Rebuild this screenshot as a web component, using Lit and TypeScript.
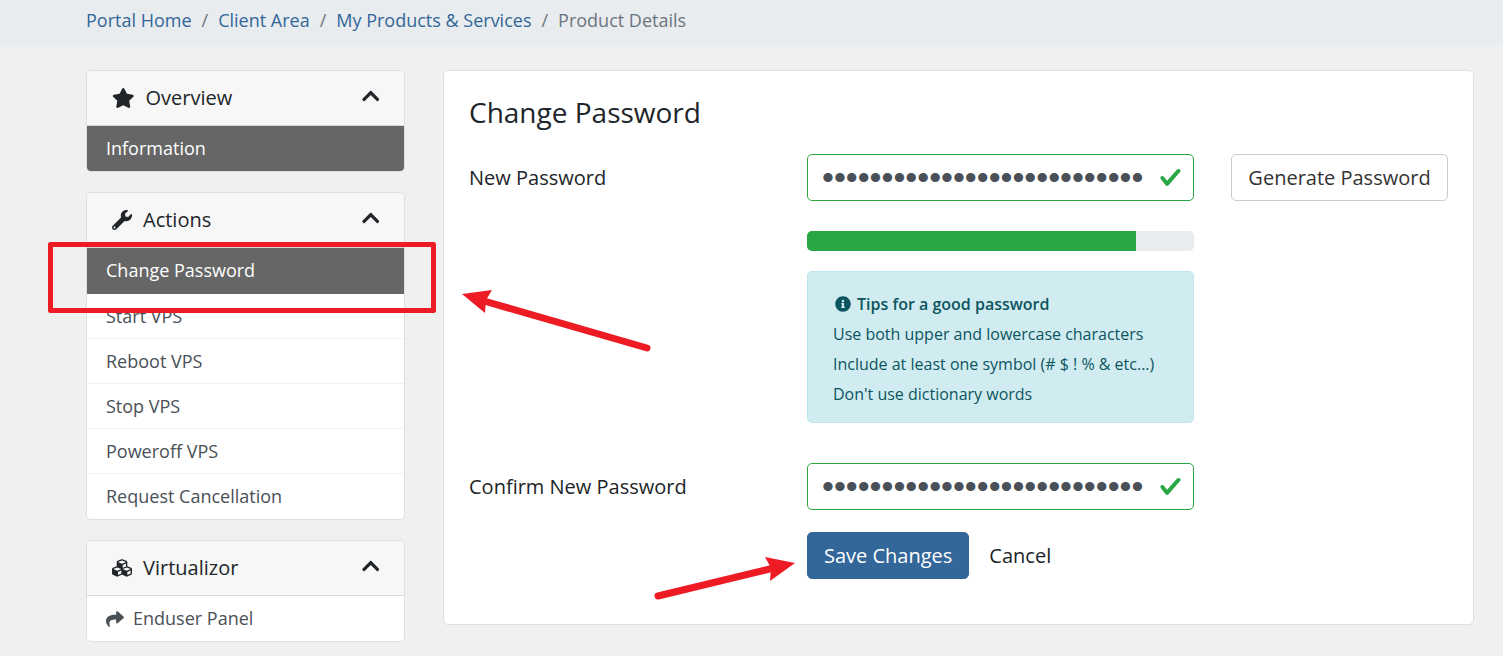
import { LitElement, html, css, svg } from "lit";
import { customElement, property } from "lit/decorators.js";

const icons = {
  star: {
    box: "0 0 576 512",
    d: "M259.3 17.8L194 150.2 47.9 171.5c-26.2 3.8-36.7 36.1-17.7 54.6l105.7 103-25 145.5c-4.5 26.3 23.2 46 46.4 33.7L288 439.6l130.7 68.7c23.2 12.2 50.9-7.4 46.4-33.7l-25-145.5 105.7-103c19-18.5 8.5-50.8-17.7-54.6L382 150.2 316.7 17.8c-11.7-23.6-45.6-23.9-57.4 0z",
  },
  wrench: {
    box: "0 0 512 512",
    d: "M507.73 109.1c-2.24-9.03-13.54-12.09-20.12-5.51l-74.36 74.36-67.88-11.31-11.31-67.88 74.36-74.36c6.62-6.62 3.43-17.9-5.66-20.16-47.38-11.74-99.55.91-136.58 37.93-39.64 39.64-50.55 97.1-34.05 147.2L18.74 402.76c-24.99 24.99-24.99 65.51 0 90.5 24.99 24.99 65.51 24.99 90.5 0l213.21-213.21c50.12 16.71 107.47 5.68 147.37-34.22 37.07-37.07 49.7-89.32 37.91-136.73zM64 472c-13.25 0-24-10.75-24-24 0-13.26 10.75-24 24-24s24 10.74 24 24c0 13.25-10.75 24-24 24z",
  },
  cubes: {
    box: "0 0 512 512",
    d: "M488.6 250.2L392 214V105.5c0-15-9.3-28.4-23.4-33.7l-100-37.5c-8.1-3.1-17.1-3.1-25.3 0l-100 37.5c-14.1 5.3-23.4 18.7-23.4 33.7V214l-96.6 36.2C9.3 255.5 0 268.9 0 283.9V394c0 13.6 7.7 26.1 19.9 32.2l100 50c10.1 5.1 22.1 5.1 32.2 0l103.9-52 103.9 52c10.1 5.1 22.1 5.1 32.2 0l100-50c12.2-6.1 19.9-18.6 19.9-32.2V283.9c0-15-9.3-28.4-23.4-33.7zM358 214.8l-85 31.9v-68.2l85-37v73.3zM154 104.1l102-38.2 102 38.2v.6l-102 41.4-102-41.4v-.6zm84 291.1l-85 42.5v-79.1l85-38.8v75.4zm0-112l-102 41.4-102-41.4v-.6l102-38.2 102 38.2v.6zm240 112l-85 42.5v-79.1l85-38.8v75.4zm0-112l-102 41.4-102-41.4v-.6l102-38.2 102 38.2v.6z",
  },
  chevronUp: {
    box: "0 0 448 512",
    d: "M240.971 130.524l194.343 194.343c9.373 9.373 9.373 24.569 0 33.941l-22.667 22.667c-9.357 9.357-24.522 9.375-33.901.04L224 227.495 69.255 381.516c-9.379 9.335-24.544 9.317-33.901-.04l-22.667-22.667c-9.373-9.373-9.373-24.569 0-33.941L207.03 130.525c9.372-9.373 24.568-9.373 33.941-.001z",
  },
  share: {
    box: "0 0 512 512",
    d: "M503.691 189.836L327.687 37.851C312.281 24.546 288 35.347 288 56.015v80.053C127.371 137.907 0 170.1 0 322.326c0 61.441 39.581 122.309 83.333 154.132 13.653 9.931 33.111-2.533 28.077-18.631C66.066 312.814 132.917 274.316 288 272.085V360c0 20.7 24.3 31.453 39.687 18.164l176.004-152c11.071-9.562 11.086-26.753 0-36.328z",
  },
  info: {
    box: "0 0 512 512",
    d: "M256 8C119.043 8 8 119.083 8 256c0 136.997 111.043 248 248 248s248-111.003 248-248C504 119.083 392.957 8 256 8zm0 110c23.196 0 42 18.804 42 42s-18.804 42-42 42-42-18.804-42-42 18.804-42 42-42zm56 254c0 6.627-5.373 12-12 12h-88c-6.627 0-12-5.373-12-12v-24c0-6.627 5.373-12 12-12h12v-64h-12c-6.627 0-12-5.373-12-12v-24c0-6.627 5.373-12 12-12h64c6.627 0 12 5.373 12 12v100h12c6.627 0 12 5.373 12 12v24z",
  },
  valid: {
    box: "0 0 8 8",
    d: "M2.3 6.73L.6 4.53c-.4-1.04.46-1.4 1.1-.8l1.1 1.4 3.4-3.8c.6-.63 1.6-.27 1.2.7l-4 4.6c-.43.5-.8.4-1.1.1z",
  },
};

type IconName = keyof typeof icons;

const icon = (name: IconName, cls: string) => html`
  <svg class=${cls} viewBox=${icons[name].box} aria-hidden="true" fill="currentColor">
    ${svg`<path d=${icons[name].d}></path>`}
  </svg>
`;

interface PanelItem {
  label: string;
  active?: boolean;
  icon?: IconName;
}

@customElement("side-panel")
class SidePanel extends LitElement {
  @property() heading = "";
  @property() icon: IconName = "star";
  @property({ attribute: false }) items: PanelItem[] = [];

  static styles = css`
    :host {
      display: block;
      background: #fff;
      border: 1px solid #dfdfdf;
      border-radius: 5px;
      overflow: hidden;
    }
    .head {
      display: flex;
      align-items: center;
      width: 100%;
      height: 55px;
      padding: 0 25px;
      border: 0;
      border-bottom: 1px solid #d8d8d8;
      background: #f7f7f7;
      color: #212529;
      font: 20px/30px "Open Sans", sans-serif;
      text-align: left;
    }
    .title {
      flex: 1;
    }
    .head-icon {
      height: 20px;
      margin-right: 11px;
    }
    .chevron {
      height: 20px;
      margin-bottom: 4px;
    }
    ul {
      list-style: none;
      margin: 0;
      padding: 0;
    }
    a {
      display: flex;
      align-items: center;
      gap: 9px;
      box-sizing: border-box;
      min-height: 45px;
      padding: 0 19px;
      border-bottom: 1px solid #f2f2f2;
      color: #495057;
      font-size: 18px;
      line-height: 27px;
      text-decoration: none;
    }
    a.active {
      min-height: 46px;
      background: #666;
      border-color: #666;
      color: #fff;
    }
    li:last-child a {
      min-height: 45px;
      border-bottom: 0;
    }
    .item-icon {
      height: 18px;
    }
  `;

  render() {
    return html`
      <button class="head" type="button" aria-expanded="true">
        ${icon(this.icon, "head-icon")}
        <span class="title">${this.heading}</span>
        ${icon("chevronUp", "chevron")}
      </button>
      <ul>
        ${this.items.map(
          (item) => html`<li>
            <a href="#" class=${item.active ? "active" : ""}>
              ${item.icon ? icon(item.icon, "item-icon") : ""}<span>${item.label}</span>
            </a>
          </li>`
        )}
      </ul>
    `;
  }
}

@customElement("app-root")
class AppRoot extends LitElement {
  private strength = 85;
  private secret = "correct-horse-battery-42!#x";

  static styles = css`
    :host {
      display: block;
      position: relative;
      min-height: 100vh;
      background: #f0f0f0;
      color: #212529;
      font-family: "Open Sans", sans-serif;
      font-size: 20px;
      line-height: 30px;
    }
    .crumbs {
      background: #e8ecef;
      padding: 7px 29px 11px 86px;
    }
    .crumbs ol {
      display: flex;
      flex-wrap: wrap;
      list-style: none;
      margin: 0;
      padding: 0;
      font-size: 18px;
      line-height: 27px;
      color: #6c757d;
    }
    .crumbs li + li::before {
      content: "/";
      padding: 0 10px;
    }
    .crumbs a {
      color: #336699;
      text-decoration: none;
    }
    .layout {
      display: grid;
      grid-template-columns: minmax(0, 319fr) minmax(0, 1031fr);
      gap: 38px;
      align-items: start;
      padding: 25px 29px 14px 86px;
    }
    .side {
      display: grid;
      gap: 20px;
    }
    .card {
      background: #fff;
      border: 1px solid #dfdfdf;
      border-radius: 5px;
      padding: 25px 25px 45px;
    }
    h1 {
      margin: 0 0 26px;
      font-size: 28px;
      line-height: 32px;
      font-weight: 400;
    }
    .row {
      display: grid;
      grid-template-columns: minmax(0, 301fr) minmax(0, 387fr) minmax(0, 217fr);
      column-gap: 37px;
      align-items: start;
    }
    .row + .row {
      margin-top: 40px;
    }
    .row + .buttons {
      margin-top: 21px;
    }
    label {
      line-height: 48px;
    }
    .stack {
      display: grid;
      gap: 20px;
    }
    .field {
      position: relative;
    }
    .field input {
      display: block;
      box-sizing: border-box;
      width: 100%;
      height: 47px;
      margin: 0;
      padding: 0 44px 0 14px;
      border: 1px solid #28a745;
      border-radius: 5px;
      background: #fff;
      color: #495057;
      font-family: "Liberation Sans", sans-serif;
      font-size: 34px;
    }
    .tick {
      position: absolute;
      top: 12px;
      right: 12px;
      height: 23px;
      color: #28a745;
    }
    .meter {
      height: 20px;
      margin-top: 10px;
      border-radius: 5px;
      background: #e9ecef;
      overflow: hidden;
    }
    .bar {
      height: 100%;
      background: #28a745;
    }
    .tips {
      padding: 17px 25px 13px;
      border: 1px solid #bee5eb;
      border-radius: 5px;
      background: #d1ecf1;
      color: #0c5460;
      font-size: 16px;
      line-height: 30px;
    }
    .tips p {
      margin: 0;
    }
    .tips .lead {
      display: flex;
      align-items: center;
      gap: 6px;
      padding-left: 2px;
      font-weight: 600;
    }
    .info {
      height: 16px;
    }
    .btn {
      height: 47px;
      padding: 0 16px;
      border: 1px solid #ccc;
      border-radius: 5px;
      background: #fff;
      color: #333;
      font: 20px/30px "Open Sans", sans-serif;
      white-space: nowrap;
    }
    .primary {
      background: #336699;
      border-color: #336699;
      color: #fff;
    }
    .plain {
      border-color: transparent;
      color: #212529;
    }
    .actions {
      display: flex;
      grid-column: 2 / -1;
      gap: 3px;
    }
    .marks {
      position: absolute;
      top: 0;
      left: 0;
      width: 820px;
      height: 640px;
      pointer-events: none;
    }
  `;

  private passwordField(id: string) {
    return html`<div class="field">
      <input id=${id} type="password" .value=${this.secret} />
      ${icon("valid", "tick")}
    </div>`;
  }

  render() {
    return html`
      <nav class="crumbs" aria-label="Breadcrumb">
        <ol>
          <li><a href="#">Portal Home</a></li>
          <li><a href="#">Client Area</a></li>
          <li><a href="#">My Products &amp; Services</a></li>
          <li>Product Details</li>
        </ol>
      </nav>
      <div class="layout">
        <aside class="side">
          <side-panel
            heading="Overview"
            icon="star"
            .items=${[{ label: "Information", active: true }]}
          ></side-panel>
          <side-panel
            heading="Actions"
            icon="wrench"
            .items=${[
              { label: "Change Password", active: true },
              { label: "Start VPS" },
              { label: "Reboot VPS" },
              { label: "Stop VPS" },
              { label: "Poweroff VPS" },
              { label: "Request Cancellation" },
            ]}
          ></side-panel>
          <side-panel
            heading="Virtualizor"
            icon="cubes"
            .items=${[{ label: "Enduser Panel", icon: "share" }]}
          ></side-panel>
        </aside>
        <main class="card">
          <h1>Change Password</h1>
          <form>
            <div class="row">
              <label for="new-password">New Password</label>
              <div class="stack">
                ${this.passwordField("new-password")}
                <div
                  class="meter"
                  role="progressbar"
                  aria-label="Password strength"
                  aria-valuenow=${this.strength}
                >
                  <div class="bar" style="width: ${this.strength}%"></div>
                </div>
                <div class="tips">
                  <p class="lead">${icon("info", "info")}Tips for a good password</p>
                  <p>Use both upper and lowercase characters</p>
                  <p>Include at least one symbol (# $ ! % &amp; etc...)</p>
                  <p>Don't use dictionary words</p>
                </div>
              </div>
              <button class="btn" type="button">Generate Password</button>
            </div>
            <div class="row">
              <label for="confirm-password">Confirm New Password</label>
              ${this.passwordField("confirm-password")}
            </div>
            <div class="row buttons">
              <div class="actions">
                <button class="btn primary" type="button">Save Changes</button>
                <button class="btn plain" type="reset">Cancel</button>
              </div>
            </div>
          </form>
        </main>
      </div>
      <svg class="marks" viewBox="0 0 820 640" aria-hidden="true">
        <rect
          x="50.5" y="244.5" width="383" height="66"
          fill="none" stroke="#ed1c24" stroke-width="5" stroke-linejoin="round"
        ></rect>
        <g stroke="#ed1c24" stroke-width="7" stroke-linecap="round">
          <path d="M647 348L484 301"></path>
          <path d="M658 596L774 568"></path>
        </g>
        <g fill="#ed1c24">
          <path d="M462 294L492 290L486 300L485 313Z"></path>
          <path d="M795 563L765 557L771 568L770 581Z"></path>
        </g>
      </svg>
    `;
  }
}
